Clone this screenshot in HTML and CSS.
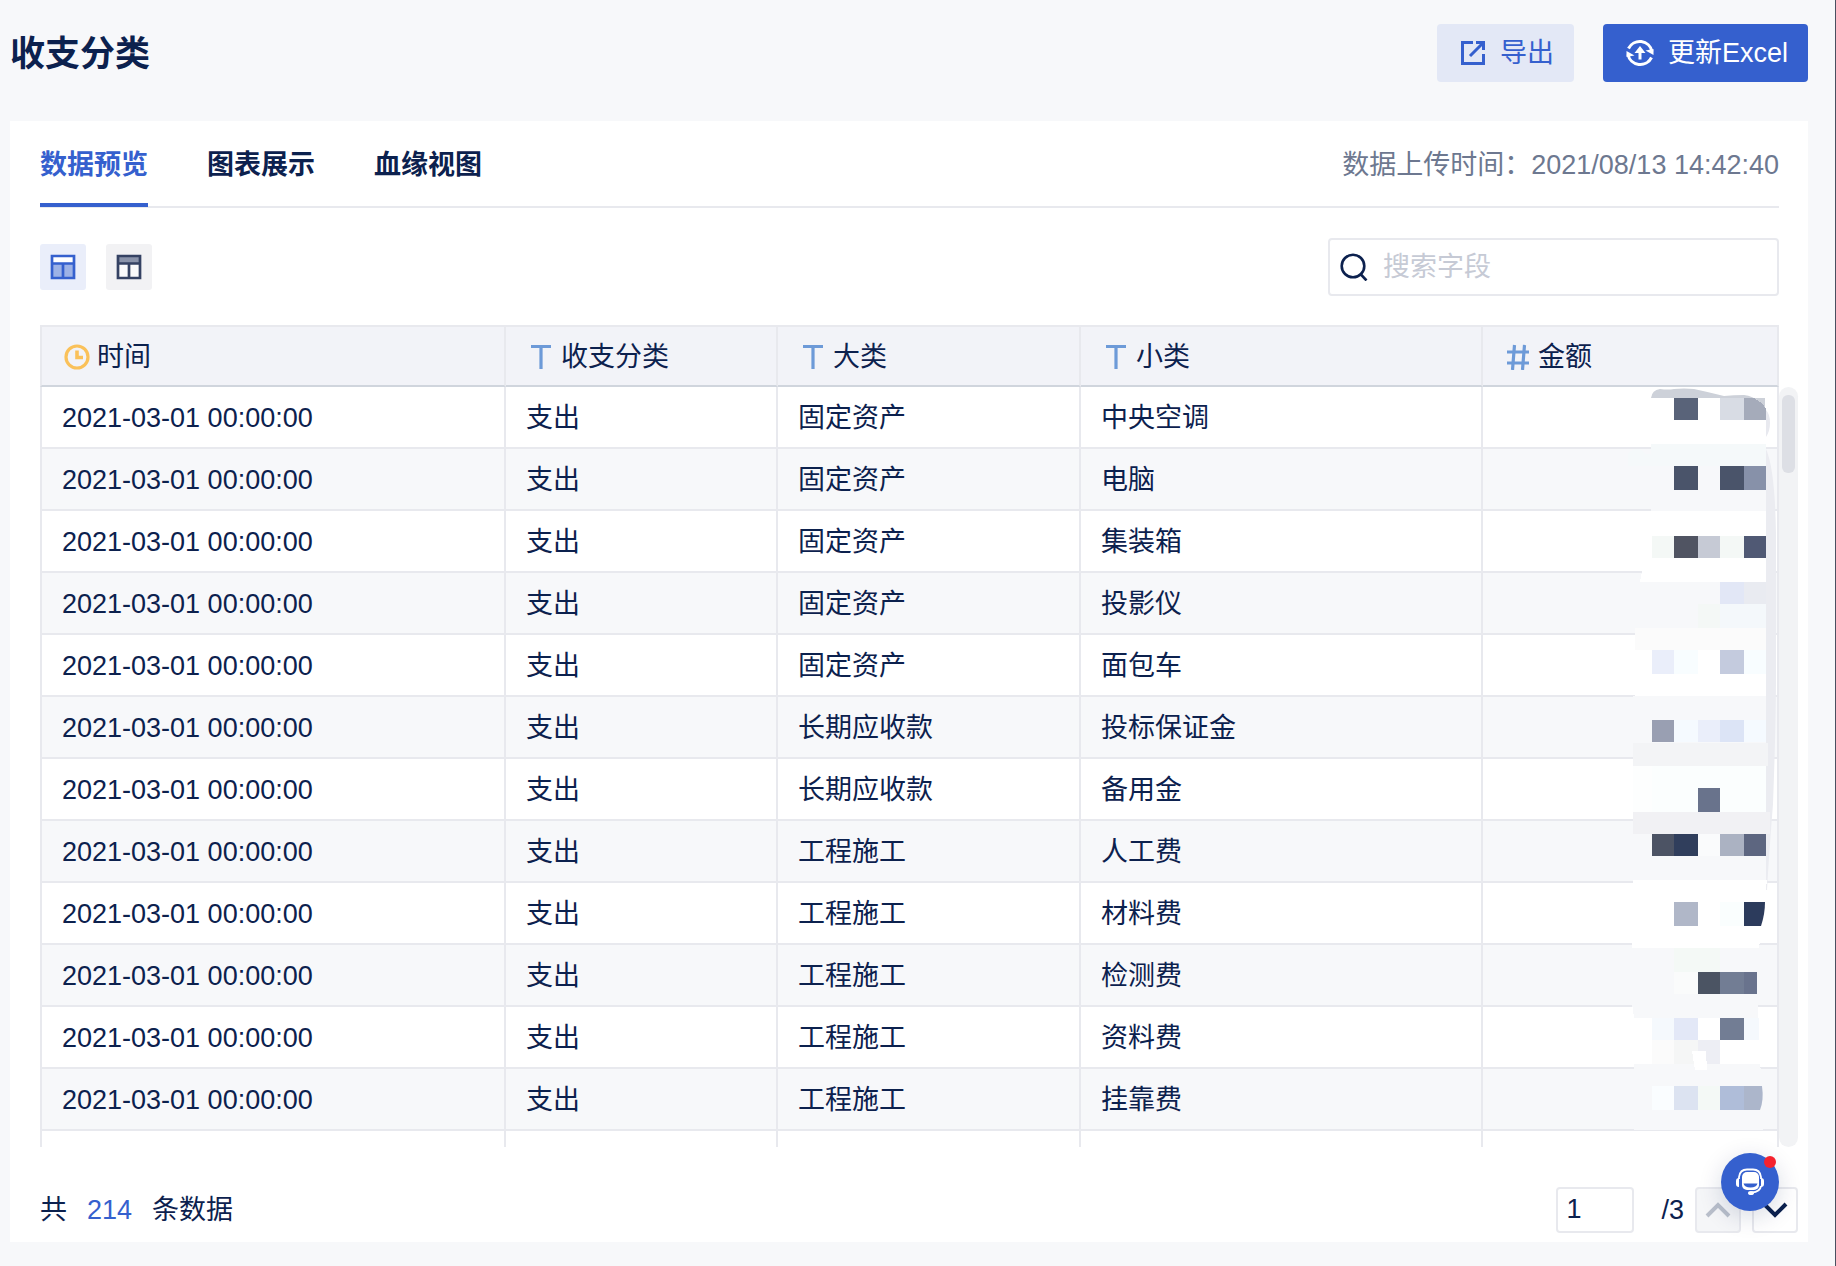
FILE: index.html
```html
<!DOCTYPE html>
<html lang="zh-CN">
<head>
<meta charset="utf-8">
<title>收支分类</title>
<link rel="stylesheet" href="styles.css">
</head>
<body>
<div class="page">
  <header class="page-head">
    <h1 class="title">收支分类</h1>
    <div class="actions">
      <button class="btn btn-soft" type="button">
        <svg class="icon" width="26" height="26" viewBox="0 0 26 26" fill="none" stroke="currentColor" stroke-width="3"><path d="M13 2.500H2.500V23.500H23.500V14M16 2.500h7.500V10M23 3L10 16"/></svg>
        导出
      </button>
      <button class="btn btn-primary" type="button">
        <svg class="icon" width="28" height="28" viewBox="0 0 28 28" fill="none" stroke="currentColor" stroke-width="3"><path d="M2.500 9.500A12.500 12.500 0 0 1 26 12.500M25.500 18.500A12.500 12.500 0 0 1 2 15.500"/><path d="M19.500 11.500l8 4.500V10zM8.500 16.500l-8-4.500v6z" fill="currentColor" stroke="none"/><path d="M14 20.500V12" stroke-width="3"/><path d="M14 7l5.500 7h-11z" fill="currentColor" stroke="none"/></svg>
        更新Excel
      </button>
    </div>
  </header>

  <main class="card">
    <div class="tabbar">
      <nav class="tabs">
        <a class="tab active" href="#preview">数据预览</a>
        <a class="tab" href="#charts">图表展示</a>
        <a class="tab" href="#lineage">血缘视图</a>
      </nav>
      <span class="upload-time">数据上传时间：2021/08/13 14:42:40</span>
    </div>

    <div class="toolbar">
      <div class="views">
        <button class="view-btn on" type="button" aria-label="数据视图">
          <svg width="26" height="26" viewBox="0 0 26 26"><path d="M2 2h22v22H2z" fill="#fff"/><path d="M2 10h22v14H2z" fill="#9db2e6"/><path d="M2 2h22v22H2zM2 9.500h22M13 9.500V24" fill="none" stroke="#3560ce" stroke-width="2.700"/></svg>
        </button>
        <button class="view-btn" type="button" aria-label="表头视图">
          <svg width="26" height="26" viewBox="0 0 26 26"><path d="M2 2h22v8H2z" fill="#8a93aa"/><path d="M2 10h22v14H2z" fill="#fafafb"/><path d="M2 2h22v22H2zM2 9.500h22M13 9.500V24" fill="none" stroke="#354263" stroke-width="2.700"/></svg>
        </button>
      </div>
      <label class="search">
        <svg width="28" height="28" viewBox="0 0 28 28" fill="none" stroke="#0c214e" stroke-width="2.600"><circle cx="13" cy="13" r="11.300"/><path d="M20 20.500l6.500 7"/></svg>
        <input type="text" placeholder="搜索字段" aria-label="搜索字段">
      </label>
    </div>

    <div class="grid">
      <div class="viewport">
        <table class="data">
          <colgroup><col class="c-time"><col class="c-kind"><col class="c-major"><col class="c-minor"><col></colgroup>
          <thead>
            <tr>
              <th><span class="th"><svg width="26" height="26" viewBox="0 0 26 26" fill="none" stroke="#fac15a"><circle cx="13" cy="13" r="11" stroke-width="3.200"/><path d="M13 6.500V13.500H19" stroke-width="3.600"/></svg>时间</span></th>
              <th><span class="th"><svg width="26" height="26" viewBox="0 0 26 26" fill="none" stroke="#6d9ad8" stroke-width="3.200"><path d="M3 2.500h20M13 2.500V25"/></svg>收支分类</span></th>
              <th><span class="th"><svg width="26" height="26" viewBox="0 0 26 26" fill="none" stroke="#6d9ad8" stroke-width="3.200"><path d="M3 2.500h20M13 2.500V25"/></svg>大类</span></th>
              <th><span class="th"><svg width="26" height="26" viewBox="0 0 26 26" fill="none" stroke="#6d9ad8" stroke-width="3.200"><path d="M3 2.500h20M13 2.500V25"/></svg>小类</span></th>
              <th><span class="th"><svg width="26" height="26" viewBox="0 0 26 26" fill="none" stroke="#6d9ad8" stroke-width="3.200"><path d="M2 8h22M2 19h22M9.500 1l-2 25M19.500 1l-2 25"/></svg>金额</span></th>
            </tr>
          </thead>
          <tbody>
            <tr><td>2021-03-01 00:00:00</td><td>支出</td><td>固定资产</td><td>中央空调</td><td></td></tr>
            <tr><td>2021-03-01 00:00:00</td><td>支出</td><td>固定资产</td><td>电脑</td><td></td></tr>
            <tr><td>2021-03-01 00:00:00</td><td>支出</td><td>固定资产</td><td>集装箱</td><td></td></tr>
            <tr><td>2021-03-01 00:00:00</td><td>支出</td><td>固定资产</td><td>投影仪</td><td></td></tr>
            <tr><td>2021-03-01 00:00:00</td><td>支出</td><td>固定资产</td><td>面包车</td><td></td></tr>
            <tr><td>2021-03-01 00:00:00</td><td>支出</td><td>长期应收款</td><td>投标保证金</td><td></td></tr>
            <tr><td>2021-03-01 00:00:00</td><td>支出</td><td>长期应收款</td><td>备用金</td><td></td></tr>
            <tr><td>2021-03-01 00:00:00</td><td>支出</td><td>工程施工</td><td>人工费</td><td></td></tr>
            <tr><td>2021-03-01 00:00:00</td><td>支出</td><td>工程施工</td><td>材料费</td><td></td></tr>
            <tr><td>2021-03-01 00:00:00</td><td>支出</td><td>工程施工</td><td>检测费</td><td></td></tr>
            <tr><td>2021-03-01 00:00:00</td><td>支出</td><td>工程施工</td><td>资料费</td><td></td></tr>
            <tr><td>2021-03-01 00:00:00</td><td>支出</td><td>工程施工</td><td>挂靠费</td><td></td></tr>
            <tr><td></td><td></td><td></td><td></td><td></td></tr>
          </tbody>
        </table>
        <!-- pixelated mask over the amounts -->
        <svg class="mask" width="159" height="760" viewBox="1620 387 159 760" aria-hidden="true" shape-rendering="crispEdges">
          <g shape-rendering="auto">
            <path d="M1651 398q1-8 9-9q8 1 14 0q10-1 20 0q14 3 30 7q10-1 20-1q18 2 25 24q0 10-4 18V398z" fill="#cdd1d9"/>
            <path d="M1766 410q4 4 4 13q0 8-4 14z" fill="#e8e9ef"/>
            <path d="M1766 449q9 20 10 85v140q0 50-3 130q-4 50-6 86h-1z" fill="#ebecf1"/>
          </g>
          <path d="M1651 398h93v46h-93z" fill="#fff"/><path d="M1744 420h22v24h-22z" fill="#fff"/>
          <path d="M1651 444h115v22h-138v-12q8-10 18 0h5z" fill="#f5f9fa"/>
          <path d="M1651 466h115v46h-115z" fill="#f7f8fa"/>
          <path d="M1651 511h115v71h-126l2-11h9z" fill="#fff"/>
          <path d="M1641 582h125v46h-125z" fill="#f7f8fa"/>
          <path d="M1635 628h131v22h-131z" fill="#fbfbfb"/>
          <path d="M1635 650h131v46h-131z" fill="#fff"/>
          <path d="M1633 696h133v47h-133z" fill="#f7f8fa"/>
          <path d="M1633 743h135v23h-135z" fill="#f3f4f6"/>
          <path d="M1633 766h133v46h-133z" fill="#fdfefe"/>
          <path d="M1633 812h137v22h-137z" fill="#f1f1f4"/>
          <path d="M1633 834h133v46h-133z" fill="#f7f8fa"/>
          <path d="M1633 880h134l-8 68h-127z" fill="#fff"/>
          <path d="M1633 948h126v55h-126z" fill="#f7f8fa"/>
          <path d="M1632 1003h126v15h-124z" fill="#f7f8fa"/>
          <path d="M1634 1018h125v46h-125z" fill="#fff"/>
          <path d="M1634 1064h126l3 22v44h-129z" fill="#f7f8fa"/>

          <path d="M1674 398h24v22h-24z" fill="#596379"/><path d="M1720 398h24v22h-24z" fill="#d8dce4"/><path d="M1744 398h10q9 5 12 11v11h-22z" fill="#a5abba"/>
          <path d="M1674 466h24v24h-24zM1720 466h24v24h-24z" fill="#4a546a"/><path d="M1744 466h22v24h-22z" fill="#8791a9"/>
          <path d="M1652 536h22v22h-22zM1720 536h24v22h-24z" fill="#f4f8f6"/><path d="M1674 536h24v22h-24z" fill="#505462"/><path d="M1698 536h22v22h-22z" fill="#c6cad5"/><path d="M1744 536h22v22h-22z" fill="#505974"/>
          <path d="M1720 582h24v22h-24z" fill="#e2e7f6"/><path d="M1744 582h22v22h-22z" fill="#e9ebf1"/><path d="M1698 604h22v24h-22z" fill="#f4f8f6"/><path d="M1720 604h46v24h-46z" fill="#f4f8fb"/>
          <path d="M1652 650h22v24h-22z" fill="#eaeefa"/><path d="M1674 650h24v24h-24zM1744 650h22v24h-22z" fill="#f8fdff"/><path d="M1720 650h24v24h-24z" fill="#c4cbde"/>
          <path d="M1652 720h22v22h-22z" fill="#999fb2"/><path d="M1674 720h24v22h-24zM1744 720h22v22h-22z" fill="#f5faff"/><path d="M1698 720h22v22h-22z" fill="#eaeefa"/><path d="M1720 720h24v22h-24z" fill="#dce4f6"/>
          <path d="M1652 766h114v46h-114z" fill="#fbfefe"/><path d="M1698 788h22v24h-22z" fill="#69738c"/>
          <path d="M1652 834h22v22h-22z" fill="#4c5364"/><path d="M1674 834h24v22h-24z" fill="#303e5c"/><path d="M1698 834h22v22h-22z" fill="#fafbfc"/><path d="M1720 834h24v22h-24z" fill="#abb2c2"/><path d="M1744 834h22v22h-22z" fill="#5d6680"/>
          <path d="M1674 902h24v24h-24z" fill="#b0b7c8"/><path d="M1720 902h24v24h-24z" fill="#fafefe"/><path d="M1744 902h21q0 12-4 24h-17z" fill="#2c3b5c" shape-rendering="auto"/>
          <path d="M1674 948h46v24h-46z" fill="#f4f9f6"/><path d="M1674 972h24v22h-24z" fill="#fafbfb"/><path d="M1698 972h22v22h-22z" fill="#4b5463"/><path d="M1720 972h24v22h-24z" fill="#727d94"/><path d="M1744 972h13v22h-13z" fill="#69738d"/>
          <path d="M1652 1018h22v22h-22zM1744 1018h15v22h-15z" fill="#f5f9fd"/><path d="M1674 1018h24v22h-24z" fill="#e3e8f7"/><path d="M1720 1018h24v22h-24z" fill="#727d94"/><path d="M1652 1040h22v24h-22z" fill="#fbfbfb"/><path d="M1674 1040h24v24h-24z" fill="#f5f6f6"/><path d="M1698 1040h22v24h-22z" fill="#edeef4"/><path d="M1692 1051h14l1 19h-12z" fill="#fff"/>
          <path d="M1652 1086h22v24h-22z" fill="#fafdff"/><path d="M1674 1086h24v24h-24z" fill="#dce3f1"/><path d="M1698 1086h22v24h-22z" fill="#f4f9f6"/><path d="M1720 1086h24v24h-24z" fill="#afbdd9"/><path d="M1744 1086h18q2 14-2 24h-16z" fill="#acb6cb" shape-rendering="auto"/>
        </svg>
      </div>
      <div class="scrollbar"><div class="thumb"></div></div>
    </div>

    <footer class="foot">
      <div class="total">共<span class="count">214</span>条数据</div>
      <div class="pager">
        <input class="page-no" type="text" value="1" aria-label="页码">
        <span class="pages">/3</span>
        <button class="step disabled" type="button" aria-label="上一页"><svg width="26" height="16" viewBox="0 0 26 16" fill="none" stroke="#b9bfcb" stroke-width="4"><path d="M2 14L13 3l11 11"/></svg></button>
        <button class="step" type="button" aria-label="下一页"><svg width="26" height="16" viewBox="0 0 26 16" fill="none" stroke="#0c214e" stroke-width="4"><path d="M2 2l11 11L24 2"/></svg></button>
      </div>
    </footer>
  </main>

  <button class="chat" type="button" aria-label="在线客服">
    <svg width="30" height="28" viewBox="0 0 30 28"><path d="M4 11V9Q5 1.500 12 1.500h6Q25 1.500 26 9v2" fill="none" stroke="#fff" stroke-width="1.800"/><rect x="7" y="4" width="17" height="18" rx="5" fill="#fff"/><path d="M8.500 15.500h14q-1 4-7 4t-7-4z" fill="#3560ce"/><path d="M4 10v9Q1 19 1 16v-3q0-3 3-3zM26 10v9q3 0 3-3v-3q0-3-3-3z" fill="#fff"/><path d="M26 18q-1 6-9 6.500" fill="none" stroke="#fff" stroke-width="1.800"/><ellipse cx="16" cy="25" rx="3" ry="2" fill="#fff"/></svg>
    <span class="dot"></span>
  </button>
</div>
</body>
</html>
```
FILE: styles.css
```css
* { box-sizing: border-box; }

body {
  margin: 0;
  background: #f7f8fa;
  color: #0c214e;
  font: 27px/40px "Liberation Sans", "Noto Sans CJK SC", sans-serif;
}

button, input { font: inherit; color: inherit; margin: 0; }
button { padding: 0; border: 0; cursor: pointer; }
svg { display: block; flex: none; }

.page {
  position: relative;
  display: flex;
  flex-direction: column;
  height: 100vh;
  padding: 24px 27px 24px 10px;
  border-right: 1px solid #4a5060;
}

.page-head {
  display: flex;
  justify-content: space-between;
  height: 97px;
}

.title {
  margin: 0;
  font-size: 35px;
  line-height: 60px;
  font-weight: 700;
}

.actions { display: flex; gap: 29px; }

.btn {
  display: flex;
  align-items: center;
  gap: 14px;
  height: 58px;
  padding: 0 20px 0 23px;
  border-radius: 4px;
}
.btn-soft { background: #e3e8f6; color: #3560ce; }
.btn-primary { background: #3560ce; color: #fff; }

.card {
  display: flex;
  flex-direction: column;
  flex: 1;
  min-height: 0;
  background: #fff;
}

.tabbar {
  display: flex;
  justify-content: space-between;
  height: 87px;
  margin: 0 29px 0 30px;
  border-bottom: 2px solid #e8e9ee;
}
.tabs { display: flex; gap: 59px; }
.tab {
  height: 86px;
  line-height: 88px;
  font-weight: 700;
  color: inherit;
  text-decoration: none;
}
.tab.active { color: #3560ce; border-bottom: 4px solid #3560ce; }
.upload-time { line-height: 88px; color: #6d7890; }

.toolbar {
  display: flex;
  align-items: center;
  justify-content: space-between;
  margin: 30px 29px 29px 30px;
}
.views { display: flex; gap: 20px; }
.view-btn {
  display: grid;
  place-items: center;
  width: 46px;
  height: 46px;
  border-radius: 3px;
  background: #f2f2f4;
}
.view-btn.on { background: #eaeefa; }

.search {
  display: flex;
  align-items: center;
  gap: 15px;
  width: 451px;
  height: 58px;
  padding: 0 10px;
  border: 2px solid #e8e9ee;
  border-radius: 4px;
}
.search input { flex: 1; min-width: 0; padding: 0; border: 0; outline: 0; background: none; }
.search input::placeholder { color: #c6cad5; opacity: 1; }

.grid {
  display: flex;
  flex: 1;
  min-height: 0;
  margin: 0 10px 0 30px;
}
.viewport { position: relative; flex: 1; overflow: hidden; }

.data {
  width: 100%;
  table-layout: fixed;
  border-collapse: separate;
  border-spacing: 0;
}
.c-time { width: 466px; }
.c-kind { width: 272px; }
.c-major { width: 303px; }
.c-minor { width: 402px; }

.data th, .data td {
  height: 62px;
  padding: 2px 20px 0;
  border-right: 2px solid #e8e9ee;
  border-bottom: 2px solid #e8e9ee;
  text-align: left;
  font-weight: 400;
}
.data th {
  padding-left: 22px;
  background: #f2f3f8;
  border-top: 2px solid #e8e9ee;
  border-bottom-color: #d0d5dd;
}
.data th:first-child, .data td:first-child { border-left: 2px solid #e8e9ee; }
.data tbody tr:nth-child(even) { background: #f7f8fa; }
.th { display: flex; align-items: center; gap: 7px; }

.mask { position: absolute; top: 62px; right: 0; }

.scrollbar {
  width: 19px;
  margin-top: 62px;
  padding: 8px 3px;
  border-radius: 10px;
  background: #f2f3f5;
}
.thumb { height: 78px; border-radius: 6px; background: #dddfe5; }

.foot {
  display: flex;
  align-items: center;
  justify-content: space-between;
  height: 95px;
  padding: 30px 10px 0 30px;
}
.count { margin: 0 20px; color: #3560ce; }
.pager { display: flex; align-items: center; }
.page-no {
  width: 78px;
  height: 46px;
  padding: 0 8px;
  border: 2px solid #e8e9ee;
  border-radius: 4px;
  background: #fff;
}
.pages { margin: 0 11px 0 27px; }
.step {
  display: grid;
  place-items: center;
  width: 46px;
  height: 46px;
  border: 2px solid #e8e9ee;
  border-radius: 4px;
  background: #fff;
}
.step.disabled { background: #f5f6f8; }
.step + .step { margin-left: 11px; }

.chat {
  position: absolute;
  right: 56px;
  bottom: 55px;
  display: grid;
  place-items: center;
  width: 58px;
  height: 58px;
  border-radius: 50%;
  background: #3560ce;
  box-shadow: 0 6px 24px rgba(12, 33, 78, 0.16);
}
.dot {
  position: absolute;
  top: 3px;
  right: 3px;
  width: 12px;
  height: 12px;
  border-radius: 50%;
  background: #f5222d;
}
```
